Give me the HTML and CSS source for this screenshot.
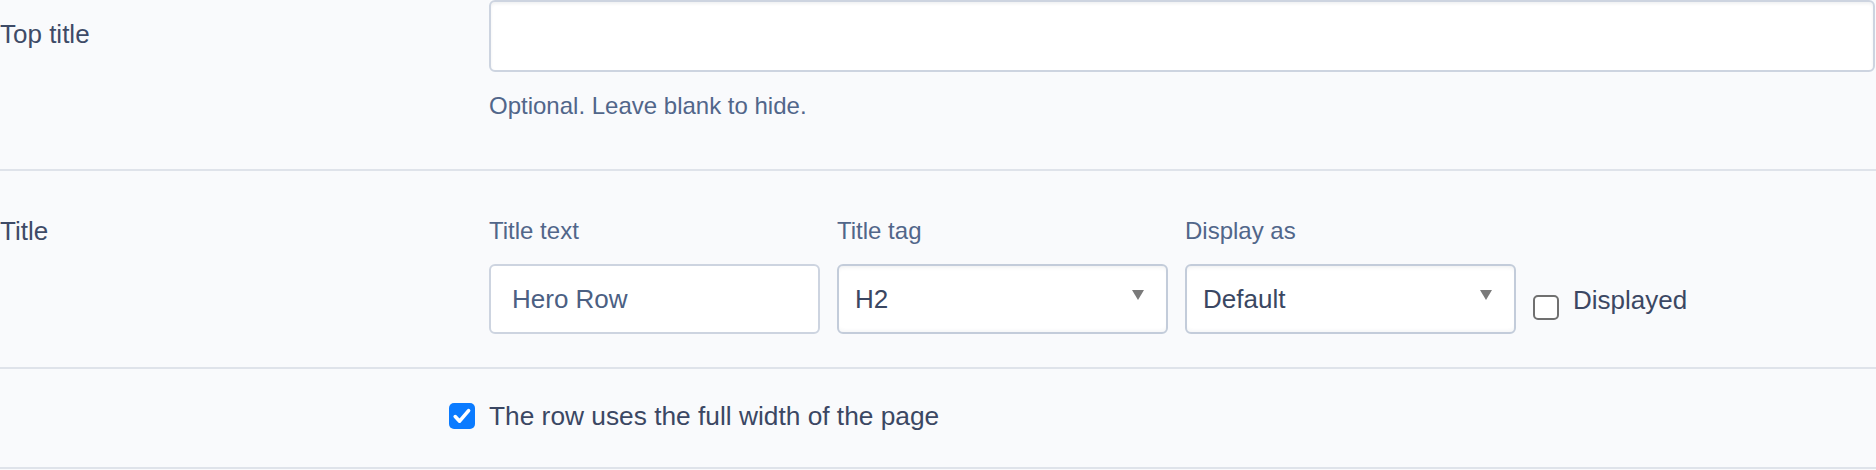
FILE: index.html
```html
<!DOCTYPE html>
<html lang="en">
<head>
<meta charset="utf-8">
<title>Row settings</title>
<link rel="stylesheet" href="styles.css">
</head>
<body>
<form class="settings">
  <div class="form-row row-top">
    <label class="row-label row-label-top" for="top-title">Top title</label>
    <div class="controls">
      <input id="top-title" class="text-input text-input-wide" type="text">
      <p class="help">Optional. Leave blank to hide.</p>
    </div>
  </div>

  <div class="form-row row-title">
    <div class="row-label">Title</div>
    <div class="controls fields">
      <div class="field">
        <label class="field-label" for="title-text">Title text</label>
        <input id="title-text" class="text-input" type="text" value="Hero Row">
      </div>
      <div class="field">
        <label class="field-label" for="title-tag">Title tag</label>
        <span class="select-wrap">
          <select id="title-tag" class="select">
            <option>H2</option>
          </select>
        </span>
      </div>
      <div class="field">
        <label class="field-label" for="display-as">Display as</label>
        <span class="select-wrap">
          <select id="display-as" class="select">
            <option>Default</option>
          </select>
        </span>
      </div>
      <label class="check check-inline">
        <span class="box"></span>
        <span class="check-text">Displayed</span>
      </label>
    </div>
  </div>

  <div class="form-row row-full">
    <div class="row-label"></div>
    <div class="controls">
      <label class="check check-outdent">
        <span class="box box-on">
          <svg viewBox="0 0 26 26" width="26" height="26" aria-hidden="true">
            <path d="M6.2 13.6 L10.6 18.2 L19.6 7.6" fill="none" stroke="#ffffff" stroke-width="3.6" stroke-linecap="round" stroke-linejoin="round"/>
          </svg>
        </span>
        <span class="check-text">The row uses the full width of the page</span>
      </label>
    </div>
  </div>
</form>
</body>
</html>
```

FILE: styles.css
```css
html, body {
  margin: 0;
  padding: 0;
}

body {
  background: #f9fafc;
  font-family: "Liberation Sans", Arial, Helvetica, sans-serif;
  color: #3c4966;
}

.settings {
  margin: 0;
}

/* one labelled row of the form */
.form-row {
  display: grid;
  grid-template-columns: 489px 1fr;
  padding-right: 1px;
  border-bottom: 2px solid #dfe3ea;
}

.row-label {
  font-size: 26px;
  line-height: 36px;
  color: #3e4b67;
}

.controls {
  min-width: 0;
}

/* Top title */
.row-top {
  height: 169px;
}

.row-label-top {
  margin-top: 16px;
}

.help {
  margin: 16px 0 0;
  font-size: 24px;
  line-height: 36px;
  color: #51668a;
}

/* text inputs and selects */
.text-input,
.select {
  box-sizing: border-box;
  height: 70px;
  margin: 0;
  border-radius: 6px;
  background: #ffffff;
  font-family: inherit;
  font-size: 26px;
  outline: none;
}

.text-input {
  display: block;
  width: 100%;
  padding: 0 21px;
  border: 2px solid #cdd4e0;
  color: #4b6083;
}

.text-input-wide {
  height: 72px;
  box-shadow: inset 0 2px 3px rgba(40, 50, 70, 0.07);
}

.select-wrap {
  position: relative;
  display: block;
}

.select {
  display: block;
  width: 100%;
  padding: 0 44px 0 16px;
  border: 2px solid #c3ccda;
  color: #3a4762;
  -webkit-appearance: none;
  appearance: none;
  box-shadow: inset 0 4px 4px -3px rgba(40, 50, 70, 0.09),
              inset 0 -4px 4px -3px rgba(40, 50, 70, 0.06);
}

/* dropdown arrow */
.select-wrap::after {
  content: "";
  position: absolute;
  top: 26px;
  right: 24px;
  width: 0;
  height: 0;
  border-left: 6px solid transparent;
  border-right: 6px solid transparent;
  border-top: 10px solid #7a7a7a;
  pointer-events: none;
}

/* Title row */
.row-title {
  padding-top: 42px;
  padding-bottom: 33px;
}

.fields {
  display: flex;
  gap: 17px;
}

.field {
  width: 331px;
  display: flex;
  flex-direction: column;
  gap: 15px;
}

.field-label {
  font-size: 24px;
  line-height: 36px;
  color: #51668a;
}

/* checkboxes */
.check {
  display: flex;
  align-items: flex-start;
  gap: 14px;
  font-size: 26px;
  line-height: 36px;
  color: #3b4763;
}

.box {
  box-sizing: border-box;
  flex: none;
  width: 26px;
  height: 26px;
  border: 2px solid #707070;
  border-radius: 5px;
  background: #ffffff;
}

.box-on {
  border: none;
  background: #0b7bff;
}

.box svg {
  display: block;
}

.check-inline {
  align-self: flex-end;
  margin-bottom: 14px;
}

.check-inline .box {
  margin-top: 13px;
  height: 25px;
}

/* full width row */
.row-full {
  padding-top: 29px;
  padding-bottom: 33px;
}

.check-outdent {
  margin-left: -40px;
  font-size: 26.3px;
}

.check-outdent .box {
  margin-top: 5px;
}
```
